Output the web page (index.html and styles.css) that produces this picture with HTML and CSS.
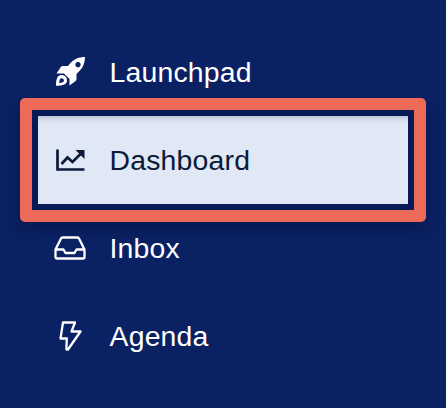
FILE: index.html
```html
<!DOCTYPE html>
<html lang="en">
<head>
  <meta charset="UTF-8">
  <meta name="viewport" content="width=device-width, initial-scale=1.0">
  <title>Sidebar</title>
  <link rel="stylesheet" href="styles.css">
</head>
<body class="sidebar-bg">
  <nav class="side-nav">
    <a class="nav-item" href="#">
      <svg class="nav-icon" viewBox="0 0 32 32">
        <path class="solid" fill-rule="evenodd" d="M31 1C25 1 20 3 16 7.500L14 10H9C8 10 7 10.500 6.500 11.500L2.500 17.500H10L15.500 23V29.500L21 25.500C22 24.800 22.500 24 22.500 23V18L25 15.500C29 11.500 31 7 31 1ZM24 6A2.700 2.700 0 1 1 23.990 6Z"/>
        <path class="solid" fill-rule="evenodd" d="M7.500 19C3.500 19 2 22.500 2 29.800C9.500 29.800 13 28 13 24.500C13 21.200 10.800 19 7.500 19ZM7.500 22.300C9 22.300 10 23.300 10 24.500C10 25.800 8.200 26.800 5.200 26.900C5.200 24 6 22.300 7.500 22.300Z"/>
      </svg>
      <span>Launchpad</span>
    </a>
    <a class="nav-item active" href="#">
      <svg class="nav-icon" viewBox="0 0 32 32">
        <path class="line heavy" d="M3.500 5.500V25.500H30.500"/>
        <path class="line heavy" d="M7.500 20L13.500 13.500L18.500 18L26.500 10"/>
        <path class="solid" d="M21.500 6H30.500V15Z"/>
      </svg>
      <span>Dashboard</span>
    </a>
    <a class="nav-item" href="#">
      <svg class="nav-icon" viewBox="0 0 32 32">
        <path class="line" d="M1.500 17.500L7 6.500C7.300 5.800 7.800 5.500 8.500 5.500H23.500C24.200 5.500 24.700 5.800 25 6.500L30.500 17.500V25C30.500 26 29.800 26.500 29 26.500H3C2.200 26.500 1.500 26 1.500 25ZM1.500 17.500H9.500L11.500 21H20.500L22.500 17.500H30.500"/>
      </svg>
      <span>Inbox</span>
    </a>
    <a class="nav-item" href="#">
      <svg class="nav-icon" viewBox="0 0 32 32">
        <path class="line" d="M9 2.500H21L17.500 11.500H26.500L14 29.500C13.300 30 12.300 29.500 12.400 28.800L12.800 18.500H6.500Z"/>
      </svg>
      <span>Agenda</span>
    </a>
  </nav>
</body>
</html>
```

FILE: styles.css
```css
/* Reset */
* {
  margin: 0;
  padding: 0;
  box-sizing: border-box;
}
body.sidebar-bg {
  background: #0a2164;
  min-height: 100vh;
  font-family: "Liberation Sans", Arial, sans-serif;
}
.side-nav {
  display: flex;
  flex-direction: column;
  width: 370px;
  margin-left: 38px;
  padding-top: 28px;
}
.nav-item {
  display: flex;
  align-items: center;
  gap: 23.5px;
  height: 88px;
  padding-left: 16px;
  color: #fff;
  font-size: 28.4px;
  letter-spacing: 0.2px;
  text-decoration: none;
}
.nav-icon {
  width: 32px;
  height: 32px;
  flex: none;
}
.nav-icon .solid {
  fill: currentColor;
}
.nav-icon .line {
  fill: none;
  stroke: currentColor;
  stroke-width: 2.3;
  stroke-linejoin: round;
  stroke-linecap: round;
}
.nav-icon .heavy {
  stroke-width: 2.7;
  stroke-linecap: butt;
  stroke-linejoin: miter;
}
/* Selected row */
.nav-item.active {
  height: 124px;
  margin: -18px;
  padding-left: 22px;
  color: #0b1a38;
  background: #e0e7f5;
  border: 12px solid #ee6a58;
  border-radius: 5px;
  box-shadow: inset 0 0 0 6px #081a58,
    inset 0 11px 6px -4px rgba(10, 25, 70, 0.25),
    0 8px 14px rgba(5, 15, 50, 0.4);
}
```
